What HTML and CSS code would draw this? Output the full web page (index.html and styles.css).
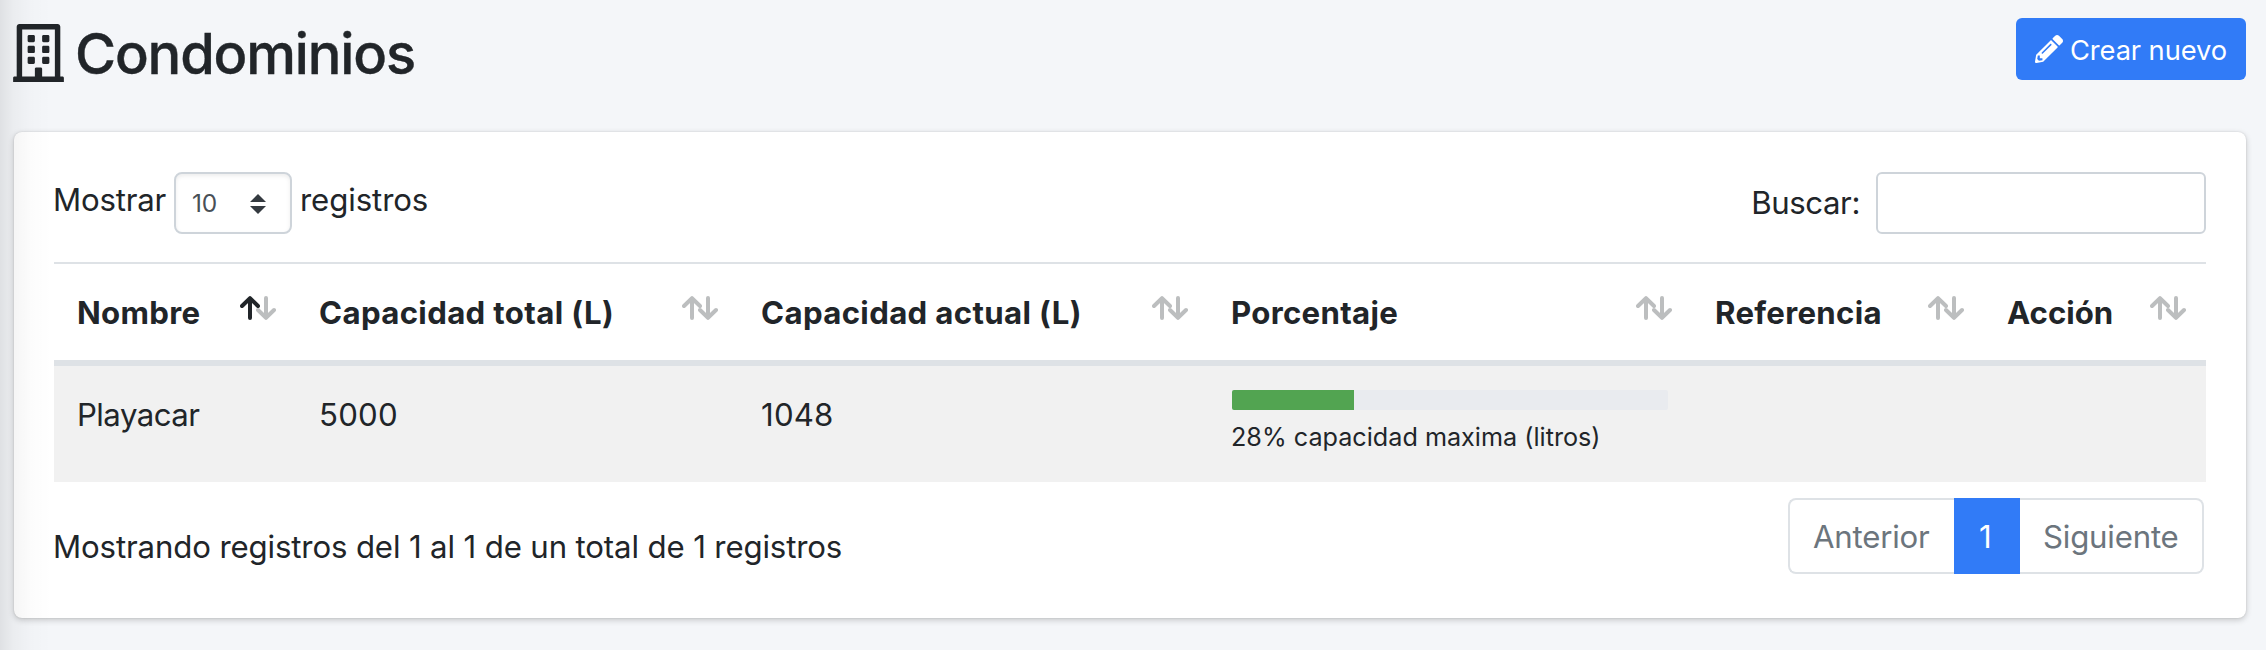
FILE: index.html
```html
<!DOCTYPE html>
<html lang="es">
<head>
<meta charset="utf-8">
<title>Condominios</title>
<link rel="stylesheet" href="styles.css">
</head>
<body>
<svg width="0" height="0" class="defs" aria-hidden="true">
  <symbol id="up" viewBox="0 0 20 24"><path d="M10 22V2.5M2 10l8-7.8L18 10"/></symbol>
  <symbol id="down" viewBox="0 0 20 24"><path d="M10 2v19.5M2 14l8 7.8L18 14"/></symbol>
</svg>
<main class="page">
  <header class="page-header">
    <h1 class="title">
      <svg class="title-icon" viewBox="0 0 448 512"><path d="M128 148v-40c0-6.6 5.4-12 12-12h40c6.6 0 12 5.4 12 12v40c0 6.6-5.4 12-12 12h-40c-6.6 0-12-5.4-12-12zm140 12h40c6.6 0 12-5.4 12-12v-40c0-6.6-5.4-12-12-12h-40c-6.6 0-12 5.4-12 12v40c0 6.6 5.4 12 12 12zm-128 96h40c6.6 0 12-5.4 12-12v-40c0-6.6-5.4-12-12-12h-40c-6.6 0-12 5.4-12 12v40c0 6.6 5.4 12 12 12zm128 0h40c6.6 0 12-5.4 12-12v-40c0-6.6-5.4-12-12-12h-40c-6.6 0-12 5.4-12 12v40c0 6.6 5.4 12 12 12zm-76 84v-40c0-6.6-5.4-12-12-12h-40c-6.6 0-12 5.4-12 12v40c0 6.6 5.4 12 12 12h40c6.6 0 12-5.4 12-12zm76 12h40c6.6 0 12-5.4 12-12v-40c0-6.6-5.4-12-12-12h-40c-6.6 0-12 5.4-12 12v40c0 6.6 5.4 12 12 12zm180 124v36H0v-36c0-6.6 5.4-12 12-12h19.5V24c0-13.3 10.7-24 24-24h337c13.3 0 24 10.7 24 24v440H436c6.6 0 12 5.4 12 12zM79.5 463H192v-67c0-6.6 5.4-12 12-12h40c6.6 0 12 5.4 12 12v67h112.5V49L80 48l-.5 415z"/></svg>
      <span class="title-text">Condominios</span>
    </h1>
    <button class="btn-create">
      <svg class="btn-icon" viewBox="0 0 512 512"><path d="M497.9 142.1l-46.1 46.1c-4.7 4.7-12.3 4.7-17 0l-111-111c-4.7-4.7-4.7-12.3 0-17l46.1-46.1c18.7-18.7 49.1-18.7 67.9 0l60.1 60.1c18.8 18.7 18.8 49.1 0 67.9zM284.2 99.8L21.6 362.4.4 483.9c-2.9 16.4 11.4 30.6 27.8 27.8l121.5-21.3 262.6-262.6c4.7-4.7 4.7-12.3 0-17l-111-111c-4.8-4.7-12.4-4.7-17.1 0zM124.1 339.9c-5.5-5.5-5.5-14.3 0-19.8l154-154c5.5-5.5 14.3-5.5 19.8 0s5.5 14.3 0 19.8l-154 154c-5.5 5.5-14.3 5.5-19.8 0zM88 424h48v36.3l-64.5 11.3-31.1-31.1L51.7 376H88v48z"/></svg>
      <span class="btn-text">Crear nuevo</span>
    </button>
  </header>

  <section class="card">
    <div class="toolbar">
      <div class="length">
        <span class="length-before">Mostrar</span>
        <div class="select"><span>10</span>
          <svg class="select-arrows" viewBox="0 0 16 20"><path d="M0 8h16L8 0zM0 12h16l-8 8z"/></svg>
        </div>
        <span class="length-after">registros</span>
      </div>
      <label class="filter"><span class="filter-label">Buscar:</span><input class="search" type="text"></label>
    </div>

    <table class="table">
      <colgroup><col class="c1"><col class="c2"><col class="c3"><col class="c4"><col class="c5"><col class="c6"></colgroup>
      <thead>
        <tr>
          <th><div class="head"><span>Nombre</span><svg class="sort" viewBox="0 0 36 24"><use href="#down" x="16" width="20" height="24"/><use class="on" href="#up" width="20" height="24"/></svg></div></th>
          <th><div class="head head-wide"><span>Capacidad total (L)</span><svg class="sort" viewBox="0 0 36 24"><use href="#up" width="20" height="24"/><use href="#down" x="16" width="20" height="24"/></svg></div></th>
          <th><div class="head head-wide"><span>Capacidad actual (L)</span><svg class="sort" viewBox="0 0 36 24"><use href="#up" width="20" height="24"/><use href="#down" x="16" width="20" height="24"/></svg></div></th>
          <th><div class="head"><span>Porcentaje</span><svg class="sort" viewBox="0 0 36 24"><use href="#up" width="20" height="24"/><use href="#down" x="16" width="20" height="24"/></svg></div></th>
          <th><div class="head"><span>Referencia</span><svg class="sort" viewBox="0 0 36 24"><use href="#up" width="20" height="24"/><use href="#down" x="16" width="20" height="24"/></svg></div></th>
          <th><div class="head head-tight"><span>Acción</span><svg class="sort" viewBox="0 0 36 24"><use href="#up" width="20" height="24"/><use href="#down" x="16" width="20" height="24"/></svg></div></th>
        </tr>
      </thead>
      <tbody>
        <tr>
          <td class="name">Playacar</td>
          <td class="number">5000</td>
          <td class="number">1048</td>
          <td class="level"><div class="progress"><div class="progress-bar" style="width:28%"></div></div><small class="progress-text">28% capacidad maxima (litros)</small></td>
          <td></td>
          <td></td>
        </tr>
      </tbody>
    </table>

    <footer class="table-footer">
      <div class="info">Mostrando registros del 1 al 1 de un total de 1 registros</div>
      <nav class="pagination">
        <span class="page-item prev">Anterior</span><span class="page-item active">1</span><span class="page-item next">Siguiente</span>
      </nav>
    </footer>
  </section>
</main>
<div class="edge-shadow"></div>
</body>
</html>
```

FILE: styles.css
```css
* { box-sizing: border-box; }
body {
  margin: 0;
  height: 650px;
  overflow: hidden;
  background: #f4f6f9;
  color: #212529;
  font: 400 31.2px/48px Inter, "Liberation Sans", sans-serif;
  letter-spacing: -0.2px;
}
.defs { position: absolute; }
.page { padding: 18px 20px 0 14px; }
.page-header { display: flex; justify-content: space-between; align-items: flex-start; height: 114px; }
.title { display: flex; align-items: center; gap: 11px; margin: -1px 0 0 -1px; font-size: 56px; line-height: 70px; font-weight: 500; letter-spacing: -1.15px; -webkit-text-stroke: 0.4px #212529; }
.title-text { padding-top: 2px; margin-bottom: -1px; }
.title-icon { width: 51px; height: 58px; fill: #212529; }
.btn-create {
  display: flex; align-items: center; gap: 7px;
  width: 230px; height: 62px; padding: 0 0 0 19px;
  border: 0; border-radius: 6px; background: #317bf7; color: #fff;
  font: 400 27.3px/42px Inter, "Liberation Sans", sans-serif; letter-spacing: -0.1px; white-space: nowrap;
}
.btn-text { padding-top: 3px; }
.btn-icon { width: 28px; height: 28px; fill: #fff; }
.card {
  height: 486px; padding: 40px; border-radius: 8px; background: #fff;
  box-shadow: 0 0 2px rgba(0,0,0,.125), 0 2px 6px rgba(0,0,0,.2);
}
.toolbar { display: flex; justify-content: space-between; height: 90px; }
.length { display: flex; }
.length-before { width: 121px; margin: 4px 0 0 -1px; }
.length-after { margin: 4px 0 0 8px; letter-spacing: -0.1px; }
.select {
  display: flex; align-items: center; justify-content: space-between;
  width: 118px; height: 62px; padding: 0 24px 0 16px;
  border: 2px solid #ced4da; border-radius: 8px;
  box-shadow: inset 0 2px 4px rgba(0,0,0,.075);
  color: #495057; font-size: 24.5px; line-height: 36px;
}
.select-arrows { width: 16px; height: 20px; margin-top: 2px; fill: #343a40; }
.filter { display: flex; }
.filter-label { margin: 7px 16px 0 0; letter-spacing: -0.4px; }
.search { width: 330px; height: 62px; border: 2px solid #ced4da; border-radius: 6px; background: #fff; }
.table { width: 2152px; table-layout: fixed; border-collapse: separate; border-spacing: 0; }
.c1 { width: 242px; }
.c2 { width: 442px; }
.c3 { width: 470px; }
.c4 { width: 484px; }
.c5 { width: 292px; }
.c6 { width: 222px; }
th { height: 104px; padding: 24px 20px 24px 23px; border-top: 2px solid #dee2e6; border-bottom: 6px solid #dee2e6; text-align: left; white-space: nowrap; font-weight: 700; letter-spacing: 0.3px; }
.head { display: flex; justify-content: space-between; height: 48px; line-height: 50px; }
.head-wide { letter-spacing: 0.35px; }
.head-tight { letter-spacing: 0; }
.sort { width: 36px; height: 24px; margin-top: 8px; fill: none; stroke: #bcbebf; stroke-width: 4; stroke-linecap: round; stroke-linejoin: round; }
.sort .on { stroke: #212529; }
td { height: 116px; padding: 25px 16px 0 23px; background: #f1f1f1; vertical-align: top; }
.name { letter-spacing: -0.55px; }
.number { letter-spacing: 0.2px; }
.level { padding: 24px 24px 0; }
.progress { height: 20px; overflow: hidden; border-radius: 2px; background: #e9ebef; }
.progress-bar { height: 100%; background: #52a451; }
.progress-text { display: block; margin: 3px 0 0 -1px; font-size: 25.2px; letter-spacing: 0; white-space: nowrap; }
.table-footer { display: flex; justify-content: space-between; padding: 16px 2px 0 0; }
.info { margin: 25px 0 0 -1px; letter-spacing: -0.14px; }
.pagination { display: flex; width: 416px; height: 76px; color: #6c757d; }
.page-item { padding: 13px 0 0 23px; border: 2px solid #dee2e6; }
.prev { width: 166px; border-right: 0; border-radius: 8px 0 0 8px; }
.active { width: 66px; border-color: #317bf7; background: #317bf7; color: #fff; }
.next { width: 184px; padding-left: 23px; border-left: 0; border-radius: 0 8px 8px 0; }
.edge-shadow { position: absolute; left: 0; top: 0; width: 52px; height: 650px; background: linear-gradient(90deg, rgba(0,0,0,.085), rgba(0,0,0,.04) 25%, rgba(0,0,0,.012) 60%, transparent); pointer-events: none; }
```
